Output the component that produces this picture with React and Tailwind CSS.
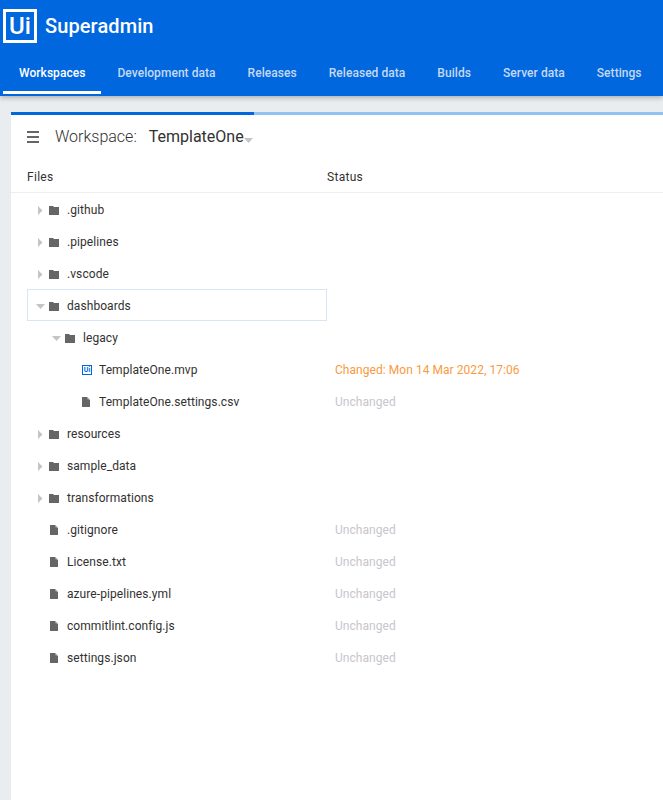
const tabs = ['Workspaces', 'Development data', 'Releases', 'Released data', 'Builds', 'Server data', 'Settings'];

const files = [
    { name: '.github', type: 'folder', depth: 0 },
    { name: '.pipelines', type: 'folder', depth: 0 },
    { name: '.vscode', type: 'folder', depth: 0 },
    { name: 'dashboards', type: 'folder', depth: 0, open: true, selected: true },
    { name: 'legacy', type: 'folder', depth: 1, open: true },
    { name: 'TemplateOne.mvp', type: 'ui', depth: 2, status: 'Changed: Mon 14 Mar 2022, 17:06', changed: true },
    { name: 'TemplateOne.settings.csv', type: 'file', depth: 2, status: 'Unchanged' },
    { name: 'resources', type: 'folder', depth: 0 },
    { name: 'sample_data', type: 'folder', depth: 0 },
    { name: 'transformations', type: 'folder', depth: 0 },
    { name: '.gitignore', type: 'file', depth: 0, status: 'Unchanged' },
    { name: 'License.txt', type: 'file', depth: 0, status: 'Unchanged' },
    { name: 'azure-pipelines.yml', type: 'file', depth: 0, status: 'Unchanged' },
    { name: 'commitlint.config.js', type: 'file', depth: 0, status: 'Unchanged' },
    { name: 'settings.json', type: 'file', depth: 0, status: 'Unchanged' },
];

const Caret = ({ open }) => (
    <svg width="9" height="9" viewBox="0 0 9 9" className="shrink-0">
        {open ? <path d="M0 2 H9 L4.5 7 Z" fill="#c4c4c4" /> : <path d="M2 0 L6.5 4.5 L2 9 Z" fill="#c4c4c4" />}
    </svg>
);

const FolderIcon = () => (
    <svg width="10" height="9" viewBox="0 0 10 9" className="shrink-0">
        <path d="M0 0 H4 L5 1 H10 V9 H0 Z" fill="#666666" />
    </svg>
);

const FileIcon = () => (
    <svg width="8" height="10" viewBox="0 0 8 10" className="shrink-0">
        <path d="M0 0 H5 L8 3 V10 H0 Z" fill="#666666" />
        <path d="M5.5 0 L8 2.5 H5.5 Z" fill="#b5b5b5" />
    </svg>
);

const UiIcon = () => (
    <span className="w-[10px] h-[10px] shrink-0 border border-[#0067df] flex items-center justify-center text-[7px] leading-none font-bold text-[#0067df]">
        Ui
    </span>
);

const TreeRow = ({ item }) => {
    const isFolder = item.type === 'folder';
    return (
        <div className="flex h-8 items-center">
            <div
                className={`w-[300px] h-8 pt-[2px] flex items-center shrink-0 ${item.selected ? 'border border-[#d6e5f7]' : ''}`}
                style={{ paddingLeft: (item.selected ? 8 : 9) + item.depth * 16 }}
            >
                <span className="w-[13px] flex justify-start shrink-0">{isFolder && <Caret open={item.open} />}</span>
                <span className={`w-[18px] flex shrink-0 ${isFolder ? 'justify-start' : 'justify-start pl-[1px]'}`}>
                    {item.type === 'folder' && <FolderIcon />}
                    {item.type === 'file' && <FileIcon />}
                    {item.type === 'ui' && <UiIcon />}
                </span>
                <span className="text-xs tracking-[0.07px] text-[#323130] whitespace-nowrap">{item.name}</span>
            </div>
            {item.status && (
                <span className={`pl-2 pt-[2px] text-xs tracking-[0.05px] whitespace-nowrap ${item.changed ? 'text-[#fa9a3f]' : 'text-[#c9c5cc]'}`}>
                    {item.status}
                </span>
            )}
        </div>
    );
};

export default function App() {
    return (
        <div className="w-[663px] h-[800px] overflow-hidden bg-[#e9edf0] font-['Roboto',sans-serif]">
            <header className="h-24 bg-[#0067df] shadow-[0_2px_5px_rgba(0,0,0,0.25)] relative">
                <div className="flex items-center pl-[3px] pt-[9px]">
                    <div className="w-[34px] h-[34px] border-[3px] border-white flex items-center justify-center text-white text-2xl font-medium leading-none">
                        Ui
                    </div>
                    <span className="ml-2 text-white text-xl font-medium tracking-[0.1px]">Superadmin</span>
                </div>
                <nav className="flex pl-[3px] mt-[6px] h-[45px]">
                    {tabs.map((tab, i) => (
                        <div
                            key={tab}
                            className={`h-[45px] px-4 flex items-center text-xs font-medium tracking-[0.05px] whitespace-nowrap ${i === 0 ? 'text-white border-b-[3px] border-white pt-[5px]' : 'text-[#c6d9f3] pt-[2px]'}`}
                        >
                            {tab}
                        </div>
                    ))}
                </nav>
            </header>

            <main className="ml-[11px] mt-4 h-[688px] bg-white">
                <div className="h-[3px] bg-[#94c0f3]">
                    <div className="h-full w-[243px] bg-[#0067df]" />
                </div>
                <div className="flex items-center h-[44px] pl-4">
                    <svg width="12" height="12" viewBox="0 0 12 12" className="shrink-0">
                        <path d="M0 0 H12 V2 H0 Z M0 5 H12 V7 H0 Z M0 10 H12 V12 H0 Z" fill="#666666" />
                    </svg>
                    <span className="ml-4 text-base font-light text-[#323130]">Workspace:</span>
                    <span className="ml-3 text-base text-[#323130]">TemplateOne</span>
                    <svg width="9" height="5" viewBox="0 0 9 5" className="mt-[6px] shrink-0">
                        <path d="M0 0 H9 L4.5 5 Z" fill="#c4c4c4" />
                    </svg>
                </div>
                <div className="flex items-center h-[34px] pl-4 pt-[2px] border-b border-[#eeeeee] text-xs tracking-[0.3px] text-[#323130]">
                    <span className="w-[300px]">Files</span>
                    <span>Status</span>
                </div>
                <div className="pl-4">
                    {files.map(item => (
                        <TreeRow key={item.name} item={item} />
                    ))}
                </div>
            </main>
        </div>
    );
}
